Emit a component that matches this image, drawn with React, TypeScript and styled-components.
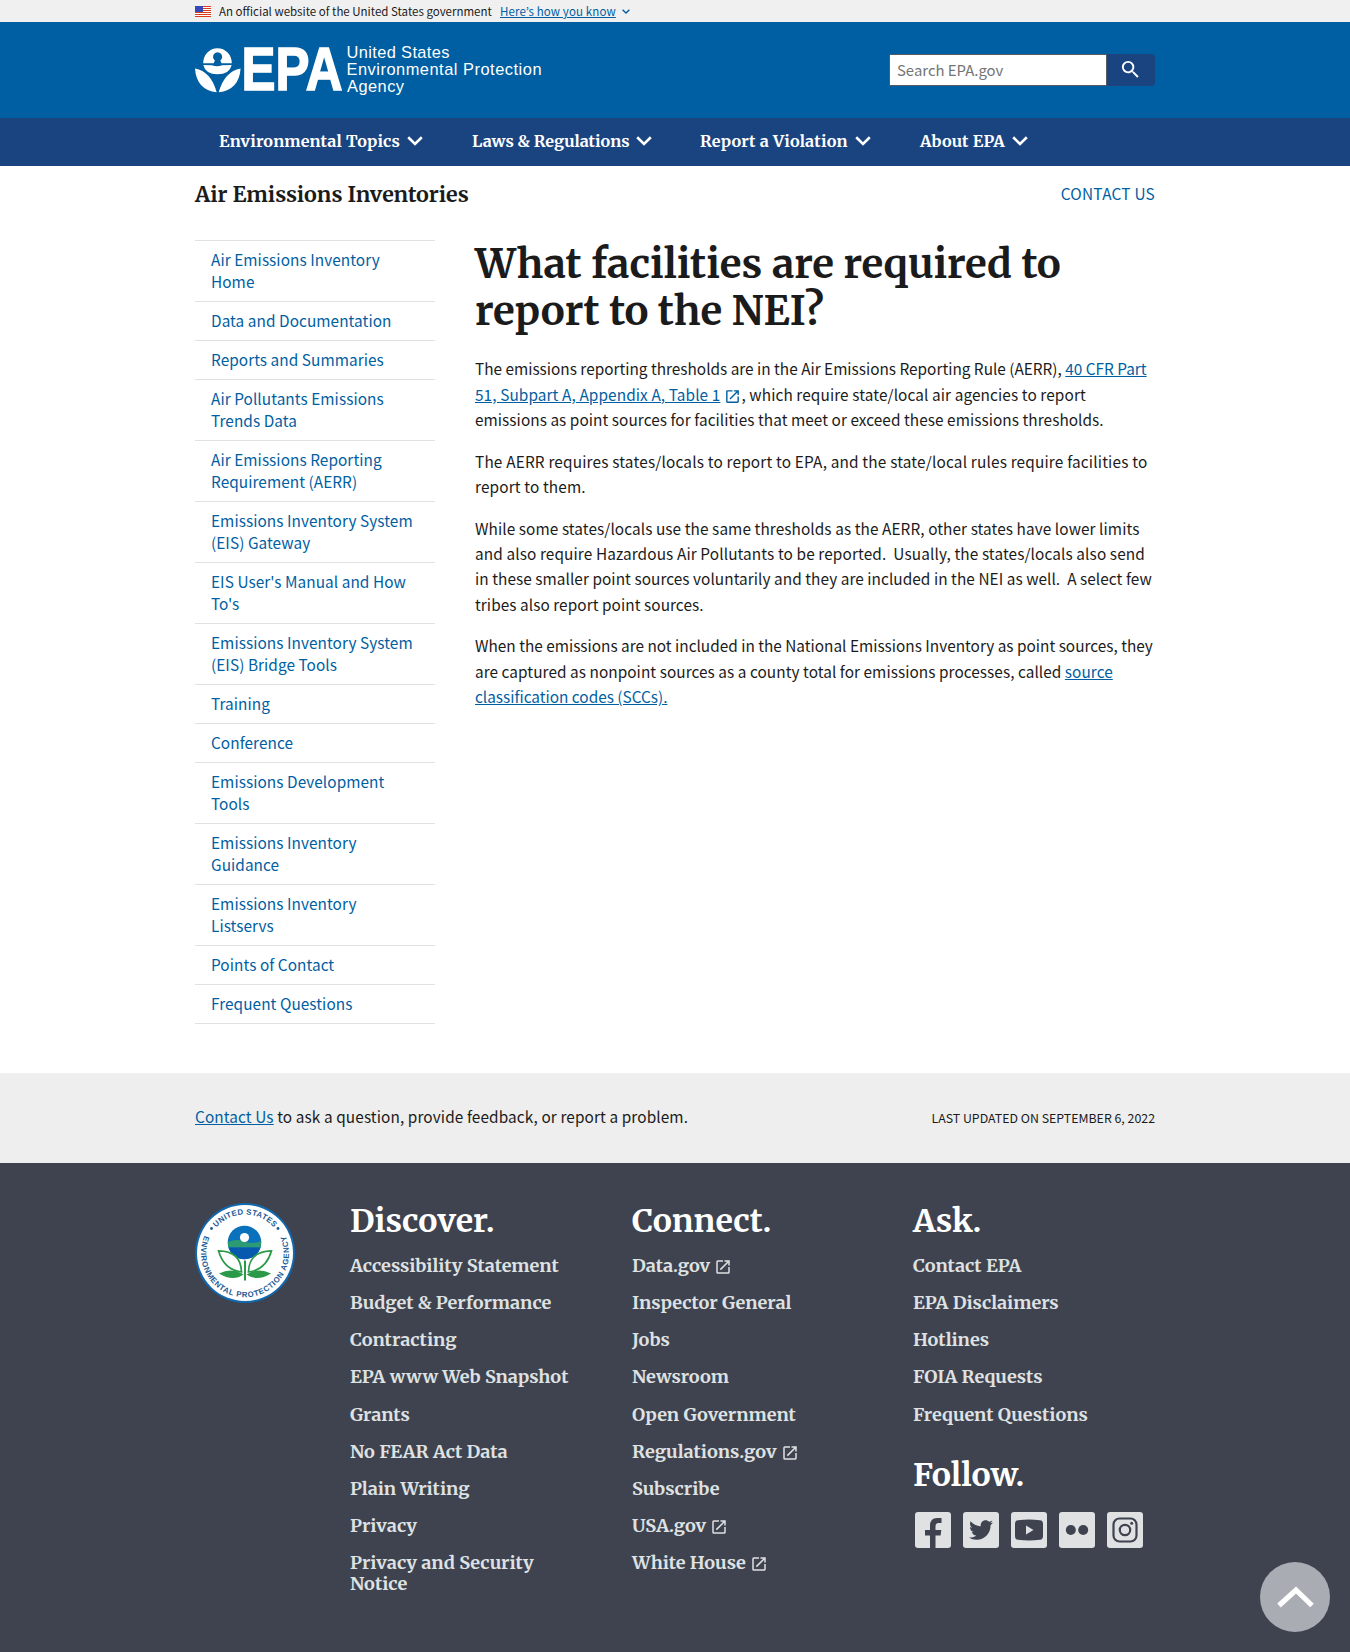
import React from "react";
import styled, { createGlobalStyle } from "styled-components";
import { MdLaunch, MdSearch } from "react-icons/md";
import { FaTwitter } from "react-icons/fa";

const sans = `"Source Sans Pro", "Noto Sans CJK JP", "Noto Sans CJK SC", sans-serif`;
const serif = `"Merriweather", "DejaVu Serif Condensed", "DejaVu Serif", serif`;

const Global = createGlobalStyle`
  * { box-sizing: border-box; }
  body { margin: 0; background: #fff; color: #1b1b1b; font-family: ${sans}; }
  ul { list-style: none; margin: 0; padding: 0; }
`;

const Page = styled.div`
  height: 1652px;
  display: flex;
  flex-direction: column;
`;

const Container = styled.div`
  width: 960px;
  margin: 0 auto;
  display: flex;
`;

const Link = styled.a`
  color: #005ea2;
  text-decoration: underline;
`;

/* government banner */
const Banner = styled.div`
  height: 22px;
  background: #f0f0f0;
  ${Container} { height: 22px; align-items: center; }
`;
const Flag = styled.svg`
  width: 16px;
  height: 11px;
  margin-right: 8px;
`;
const BannerText = styled.span`
  font-size: 11.5px;
  line-height: 22px;
  width: 281px;
  white-space: nowrap;
`;
const BannerLink = styled(Link)`
  font-size: 11.5px;
  letter-spacing: 0.12px;
  line-height: 22px;
  margin-right: 6px;
  white-space: nowrap;
`;

/* header */
const Header = styled.header`
  height: 95.5px;
  background: #005ea2;
  ${Container} { justify-content: space-between; }
`;
const Logo = styled.svg`
  width: 360px;
  height: 76px;
  margin-top: 8px;
`;
const SearchForm = styled.div`
  display: flex;
  margin-top: 32px;
  height: 32px;
  width: 266px;
`;
const SearchInput = styled.div`
  flex: 1;
  background: #fff;
  border: 1px solid #565c65;
  color: #757575;
  font-size: 14.9px;
  line-height: 30px;
  padding-left: 7px;
`;
const SearchButton = styled.div`
  width: 48px;
  background: #1a4480;
  border-radius: 0 4px 4px 0;
  display: flex;
  align-items: center;
  justify-content: center;
  svg { color: #fff; width: 23px; height: 23px; margin: -1px 2px 0 0; }
`;

/* main navigation */
const Nav = styled.nav`
  height: 48.5px;
  background: #1a4480;
  ${Container} { padding-left: 24px; height: 47px; align-items: center; }
`;
const NavItem = styled.a<{ $w: number; $ls: number }>`
  width: ${(p) => p.$w}px;
  display: flex;
  align-items: center;
  gap: 7px;
  color: #fff;
  font: 700 16.2px/22px ${serif};
  letter-spacing: ${(p) => p.$ls}px;
  white-space: nowrap;
`;

/* site title */
const TitleBar = styled.div`
  height: 74px;
  ${Container} { justify-content: space-between; padding-top: 14px; }
`;
const SiteTitle = styled.div`
  font: 700 21.4px/30px ${serif};
`;
const ContactTop = styled.a`
  color: #005ea2;
  font-size: 15.36px;
  letter-spacing: 0.25px;
  line-height: 26px;
`;

const Body = styled.div`
  height: 833px;
  ${Container} { gap: 40px; align-items: flex-start; }
`;
const SideNav = styled.ul`
  width: 240px;
  border-bottom: 1px solid #dfe1e2;
`;
const SideItem = styled.li`
  border-top: 1px solid #dfe1e2;
  padding: 7px 16px 9px;
  font-size: 15.36px;
  letter-spacing: 0.06px;
  line-height: 22px;
  color: #005ea2;
  white-space: nowrap;
`;
const Main = styled.main`
  width: 680px;
`;
const H1 = styled.h1`
  margin: 0 0 22.4px;
  font: 700 40.15px/47px ${serif};
`;
const P = styled.p`
  margin: 0 0 16px;
  font-size: 15.36px;
  line-height: 25.44px;
  white-space: nowrap;
`;
const Line = styled.span<{ $ls?: number }>`
  display: block;
  height: 25.44px;
  letter-spacing: ${(p) => p.$ls ?? 0}px;
`;
const InlineIcon = styled(MdLaunch)`
  width: 17px;
  height: 17px;
  color: #005ea2;
  margin-left: 4px;
  vertical-align: -4px;
`;

/* contact strip */
const ContactStrip = styled.div`
  height: 90px;
  background: #eee;
  ${Container} { height: 86px; align-items: center; justify-content: space-between; }
`;
const StripText = styled.div`
  font-size: 15.36px;
  letter-spacing: 0.1px;
  line-height: 26px;
`;
const Updated = styled.div`
  font-size: 12.36px;
  line-height: 26px;
  padding-top: 4px;
`;

/* footer */
const Footer = styled.footer`
  flex: 1;
  background: #3e434f;
  color: #dfe1e2;
  ${Container} { padding-top: 40px; }
`;
const Seal = styled.svg`
  width: 100px;
  height: 100px;
  margin-right: 55px;
`;
const Column = styled.div<{ $w: number }>`
  width: ${(p) => p.$w}px;
`;
const FootHeading = styled.h2`
  margin: 0;
  color: #fff;
  font: 700 32.1px/36px ${serif};
`;
const FootList = styled.ul`
  padding-top: 16px;
`;
const FootItem = styled.li`
  display: flex;
  align-items: center;
  gap: 4px;
  font: 700 18.1px/21.1px ${serif};
  margin-bottom: 16.05px;
  white-space: nowrap;
  svg { width: 18px; height: 18px; margin-top: 3px; }
`;
const Follow = styled.div`
  margin-top: 32px;
`;
const Socials = styled.div`
  display: flex;
  gap: 12px;
  padding: 19px 0 0 2px;
`;
const Social = styled.div`
  width: 36px;
  height: 36px;
  border-radius: 3px;
  background: #dfe1e2;
  color: #3e434f;
  display: flex;
  overflow: hidden;
  align-items: center;
  justify-content: center;
`;
const BackToTop = styled.a`
  position: fixed;
  right: 20px;
  bottom: 20px;
  width: 70px;
  height: 70px;
  border-radius: 50%;
  background: #a9adb3;
  display: flex;
  align-items: center;
  justify-content: center;
`;

const navItems = [
  { label: "Environmental Topics", w: 253, ls: 0.17 },
  { label: "Laws & Regulations", w: 228, ls: -0.03 },
  { label: "Report a Violation", w: 220, ls: 0.2 },
  { label: "About EPA", w: 120, ls: 0.15 },
];

const sideItems: string[][] = [
  ["Air Emissions Inventory", "Home"],
  ["Data and Documentation"],
  ["Reports and Summaries"],
  ["Air Pollutants Emissions", "Trends Data"],
  ["Air Emissions Reporting", "Requirement (AERR)"],
  ["Emissions Inventory System", "(EIS) Gateway"],
  ["EIS User's Manual and How", "To's"],
  ["Emissions Inventory System", "(EIS) Bridge Tools"],
  ["Training"],
  ["Conference"],
  ["Emissions Development", "Tools"],
  ["Emissions Inventory", "Guidance"],
  ["Emissions Inventory", "Listservs"],
  ["Points of Contact"],
  ["Frequent Questions"],
];

const discover = [
  "Accessibility Statement",
  "Budget & Performance",
  "Contracting",
  "EPA www Web Snapshot",
  "Grants",
  "No FEAR Act Data",
  "Plain Writing",
  "Privacy",
];
const connect = [
  { label: "Data.gov", ext: true },
  { label: "Inspector General" },
  { label: "Jobs" },
  { label: "Newsroom" },
  { label: "Open Government" },
  { label: "Regulations.gov", ext: true },
  { label: "Subscribe" },
  { label: "USA.gov", ext: true },
  { label: "White House", ext: true },
];
const ask = ["Contact EPA", "EPA Disclaimers", "Hotlines", "FOIA Requests", "Frequent Questions"];

function Chevron({ w, h, color, stroke }: { w: number; h: number; color: string; stroke: number }) {
  return (
    <svg width={w} height={h} viewBox="0 0 16 10">
      <path d="M1.2 1.3 L8 8 L14.8 1.3" fill="none" stroke={color} strokeWidth={stroke} />
    </svg>
  );
}

function EpaLogo() {
  return (
    <Logo viewBox="195 30 360 76" fill="#fff">
      <path d="M203.2 63.2 A14.3 15 0 0 1 231.8 63.2 L221.5 63.2 L220.3 60.5 A4.6 4.6 0 1 0 214.9 60.5 L213.7 63.2 Z" />
      <path d="M203.3 65 L212 65.2 Q217 67.3 222 65.2 L231.7 65 Q229.5 74.3 217.5 74.3 Q205.5 74.3 203.3 65 Z" />
      <path d="M195 68.5 Q211 71.5 216.7 92.3 Q196.5 90 195 68.5 Z" />
      <path d="M240.6 68.5 Q224.5 71.5 218.7 92.3 Q239 90 240.6 68.5 Z" />
      <text
        x="241.5"
        y="90.3"
        textLength="101"
        lengthAdjust="spacingAndGlyphs"
        fontFamily="Liberation Sans"
        fontWeight="700"
        fontSize="61.5"
        stroke="#fff"
        strokeWidth="1.6"
      >
        EPA
      </text>
      <g fontFamily="Liberation Sans" fontSize="16.4">
        <text x="346.5" y="58" textLength="103">United States</text>
        <text x="346.5" y="75" textLength="195">Environmental Protection</text>
        <text x="347" y="91.7" textLength="57">Agency</text>
      </g>
    </Logo>
  );
}

function EpaSeal() {
  return (
    <Seal viewBox="0 0 100 100">
      <circle cx="50" cy="50" r="50" fill="#1268ad" />
      <circle cx="50" cy="50" r="48" fill="#fff" />
      <defs>
        <path id="sealTop" d="M11.5 50 A38.5 38.5 0 0 1 88.5 50" />
        <path id="sealBottom" d="M12 28 A44 44 0 1 0 88 28" />
      </defs>
      <g fill="#1b5a94" fontFamily="Liberation Sans" fontWeight="700" fontSize="7.8">
        <text textAnchor="middle" textLength="65">
          <textPath href="#sealTop" startOffset="50%">UNITED STATES</textPath>
        </text>
        <text textAnchor="middle" textLength="174">
          <textPath href="#sealBottom" startOffset="50%">ENVIRONMENTAL PROTECTION AGENCY</textPath>
        </text>
      </g>
      <circle cx="16.5" cy="25.5" r="1.4" fill="#1b5a94" />
      <circle cx="83" cy="25.5" r="1.4" fill="#1b5a94" />
      <circle cx="49.5" cy="39.5" r="16.8" fill="#0a71bd" />
      <path d="M32.8 39 Q41 35.5 49 38.5 Q57 41.5 66.2 38 L65.6 44.5 L33.4 44.5 Z" fill="#2c9a72" />
      <path d="M33.5 44.5 H65.5 A16.8 16.8 0 0 1 33.5 44.5 Z" fill="#0759ad" />
      <circle cx="49.5" cy="34.5" r="4.6" fill="#fff" />
      <path d="M24 70.5 Q37 64 48.5 71.5 Q38 79 24 70.5 Z M76 70.5 Q63 64 51.5 71.5 Q62 79 76 70.5 Z" fill="#2a9a48" />
      <g fill="#fff" stroke="#2a9a48" strokeWidth="1.7">
        <path d="M23.5 47.8 Q46 48 46.5 69 Q29 67 23.5 47.8 Z" />
        <path d="M76.5 47.8 Q54 48 53.5 69 Q71 67 76.5 47.8 Z" />
        <path d="M50 57.5 V77.5" strokeWidth="2" />
      </g>
    </Seal>
  );
}

function Lines({ parts }: { parts: string[] }) {
  return (
    <>
      {parts.map((t, i) => (
        <React.Fragment key={t}>
          {i > 0 && <br />}
          {t}
        </React.Fragment>
      ))}
    </>
  );
}

export default function App() {
  return (
    <Page>
      <Global />
      <Banner>
        <Container>
          <Flag viewBox="0 0 16 11">
            <rect width="16" height="11" fill="#fff" />
            {[0, 2, 4, 6, 8, 10].map((y) => (
              <rect key={y} y={y} width="16" height="1" fill="#db3e1f" />
            ))}
            <rect width="8" height="6" fill="#1e33b1" />
            {[1, 3, 5, 7].map((x) =>
              [1, 3, 5].map((y) => <circle key={`${x}-${y}`} cx={x} cy={y} r=".4" fill="#fff" />)
            )}
          </Flag>
          <BannerText>An official website of the United States government</BannerText>
          <BannerLink>Here’s how you know</BannerLink>
          <Chevron w={8} h={5} color="#005ea2" stroke={2.8} />
        </Container>
      </Banner>
      <Header>
        <Container>
          <EpaLogo />
          <SearchForm>
            <SearchInput>Search EPA.gov</SearchInput>
            <SearchButton>
              <MdSearch />
            </SearchButton>
          </SearchForm>
        </Container>
      </Header>
      <Nav>
        <Container>
          {navItems.map((n) => (
            <NavItem key={n.label} $w={n.w} $ls={n.ls}>
              {n.label}
              <Chevron w={16} h={10} color="#fff" stroke={2.6} />
            </NavItem>
          ))}
        </Container>
      </Nav>
      <TitleBar>
        <Container>
          <SiteTitle>Air Emissions Inventories</SiteTitle>
          <ContactTop>CONTACT US</ContactTop>
        </Container>
      </TitleBar>
      <Body>
        <Container>
          <SideNav>
            {sideItems.map((s) => (
              <SideItem key={s.join()}>
                <Lines parts={s} />
              </SideItem>
            ))}
          </SideNav>
          <Main>
            <H1>
              What facilities are required to
              <br />
              report to the NEI?
            </H1>
            <P>
              <Line>
                The emissions reporting thresholds are in the Air Emissions Reporting Rule (AERR),{" "}
                <Link>40 CFR Part</Link>
              </Line>
              <Line $ls={0.1}>
                <Link>51, Subpart A, Appendix A, Table 1</Link>
                <InlineIcon />, which require state/local air agencies to report
              </Line>
              <Line $ls={0.055}>
                emissions as point sources for facilities that meet or exceed these emissions thresholds.
              </Line>
            </P>
            <P>
              <Line $ls={0.175}>
                The AERR requires states/locals to report to EPA, and the state/local rules require facilities to
              </Line>
              <Line $ls={0.13}>report to them.</Line>
            </P>
            <P>
              <Line $ls={0.08}>
                While some states/locals use the same thresholds as the AERR, other states have lower limits
              </Line>
              <Line $ls={0.11}>
                and also require Hazardous Air Pollutants to be reported.&nbsp; Usually, the states/locals also send
              </Line>
              <Line $ls={0.055}>
                in these smaller point sources voluntarily and they are included in the NEI as well.&nbsp; A select few
              </Line>
              <Line $ls={0.06}>tribes also report point sources.</Line>
            </P>
            <P>
              <Line>
                When the emissions are not included in the National Emissions Inventory as point sources, they
              </Line>
              <Line $ls={0.055}>
                are captured as nonpoint sources as a county total for emissions processes, called <Link>source</Link>
              </Line>
              <Line>
                <Link>classification codes (SCCs).</Link>
              </Line>
            </P>
          </Main>
        </Container>
      </Body>
      <ContactStrip>
        <Container>
          <StripText>
            <Link>Contact Us</Link> to ask a question, provide feedback, or report a problem.
          </StripText>
          <Updated>LAST UPDATED ON SEPTEMBER 6, 2022</Updated>
        </Container>
      </ContactStrip>
      <Footer>
        <Container>
          <EpaSeal />
          <Column $w={282}>
            <FootHeading>Discover.</FootHeading>
            <FootList>
              {discover.map((d) => (
                <FootItem key={d}>{d}</FootItem>
              ))}
              <FootItem>
                <span>
                  <Lines parts={["Privacy and Security", "Notice"]} />
                </span>
              </FootItem>
            </FootList>
          </Column>
          <Column $w={281}>
            <FootHeading>Connect.</FootHeading>
            <FootList>
              {connect.map((c) => (
                <FootItem key={c.label}>
                  {c.label}
                  {c.ext && <MdLaunch />}
                </FootItem>
              ))}
            </FootList>
          </Column>
          <Column $w={242}>
            <FootHeading>Ask.</FootHeading>
            <FootList>
              {ask.map((a) => (
                <FootItem key={a}>{a}</FootItem>
              ))}
            </FootList>
            <Follow>
              <FootHeading>Follow.</FootHeading>
              <Socials>
                <Social>
                  <svg width="36" height="36" viewBox="0 0 36 36" fill="#3e434f">
                    <path d="M15 36 V23.5 H10 V18 H15 V14 Q15 6 22 6 H26.5 V11 H23.5 Q20.500 11 20.500 14.500 V18 H26.3 L25.6 23.5 H20.5 V36 Z" />
                  </svg>
                </Social>
                <Social>
                  <FaTwitter size={24} />
                </Social>
                <Social>
                  <svg width="30" height="22" viewBox="0 0 30 22">
                    <path d="M4 1.2 Q15 0 26 1.2 Q29 1.5 29 5 V17 Q29 20.5 26 20.8 Q15 22 4 20.8 Q1 20.5 1 17 V5 Q1 1.5 4 1.2 Z" fill="#3e434f" />
                    <path d="M12 6.5 L19.5 11 L12 15.5 Z" fill="#dfe1e2" />
                  </svg>
                </Social>
                <Social>
                  <svg width="24" height="12" viewBox="0 0 24 12" fill="#3e434f">
                    <circle cx="5.8" cy="6" r="5" />
                    <circle cx="18.2" cy="6" r="5" />
                  </svg>
                </Social>
                <Social>
                  <svg width="26" height="26" viewBox="0 0 26 26" fill="none" stroke="#3e434f" strokeWidth="2.2">
                    <rect x="1.5" y="1.5" width="23" height="23" rx="6" />
                    <circle cx="13" cy="13" r="5.2" />
                    <circle cx="19.7" cy="6.3" r="1.5" fill="#3e434f" stroke="none" />
                  </svg>
                </Social>
              </Socials>
            </Follow>
          </Column>
        </Container>
      </Footer>
      <BackToTop>
        <svg width="38" height="24" viewBox="0 0 38 24">
          <path d="M3 20.5 L20 5 L36 20.5" fill="none" stroke="#fff" strokeWidth="5.2" />
        </svg>
      </BackToTop>
    </Page>
  );
}
